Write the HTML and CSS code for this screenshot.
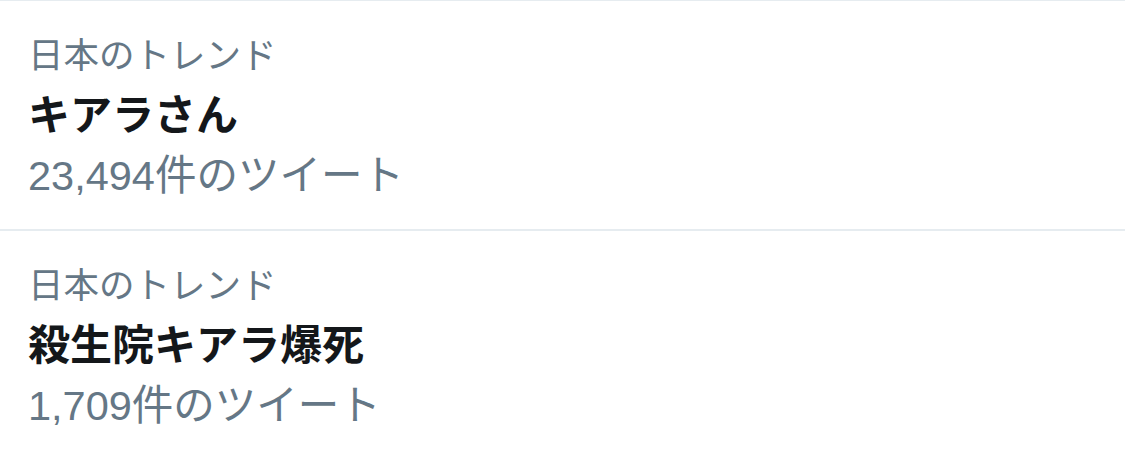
FILE: index.html
```html
<!DOCTYPE html>
<html lang="ja">
<head>
    <meta charset="UTF-8">
    <title>日本のトレンド</title>
    <link rel="stylesheet" href="styles.css">
</head>
<body>
    <div class="trends">
        <div class="trend">
            <div class="trend-label">日本のトレンド</div>
            <div class="trend-name">キアラさん</div>
            <div class="trend-count">23,494件のツイート</div>
        </div>
        <div class="trend">
            <div class="trend-label">日本のトレンド</div>
            <div class="trend-name">殺生院キアラ爆死</div>
            <div class="trend-count">1,709件のツイート</div>
        </div>
    </div>
</body>
</html>
```

FILE: styles.css
```css
* {
    box-sizing: border-box;
    margin: 0;
    padding: 0;
}

body {
    background: #ffffff;
    font-family: "Liberation Sans", "Noto Sans CJK JP", sans-serif;
    color: #14171a;
}

.trends {
    border-top: 1px solid #e6ecf0;
}

.trend {
    display: flex;
    flex-direction: column;
    padding: 25px 0 23px 28px;
    border-bottom: 2px solid #e6ecf0;
}

.trend:last-child {
    border-bottom: none;
}

.trend-label {
    font-size: 35.5px;
    line-height: 60px;
    color: #657786;
}

.trend-name {
    font-size: 42px;
    line-height: 60px;
    font-weight: 700;
    color: #14171a;
}

.trend-count {
    font-size: 41.5px;
    line-height: 60px;
    color: #657786;
}
```
